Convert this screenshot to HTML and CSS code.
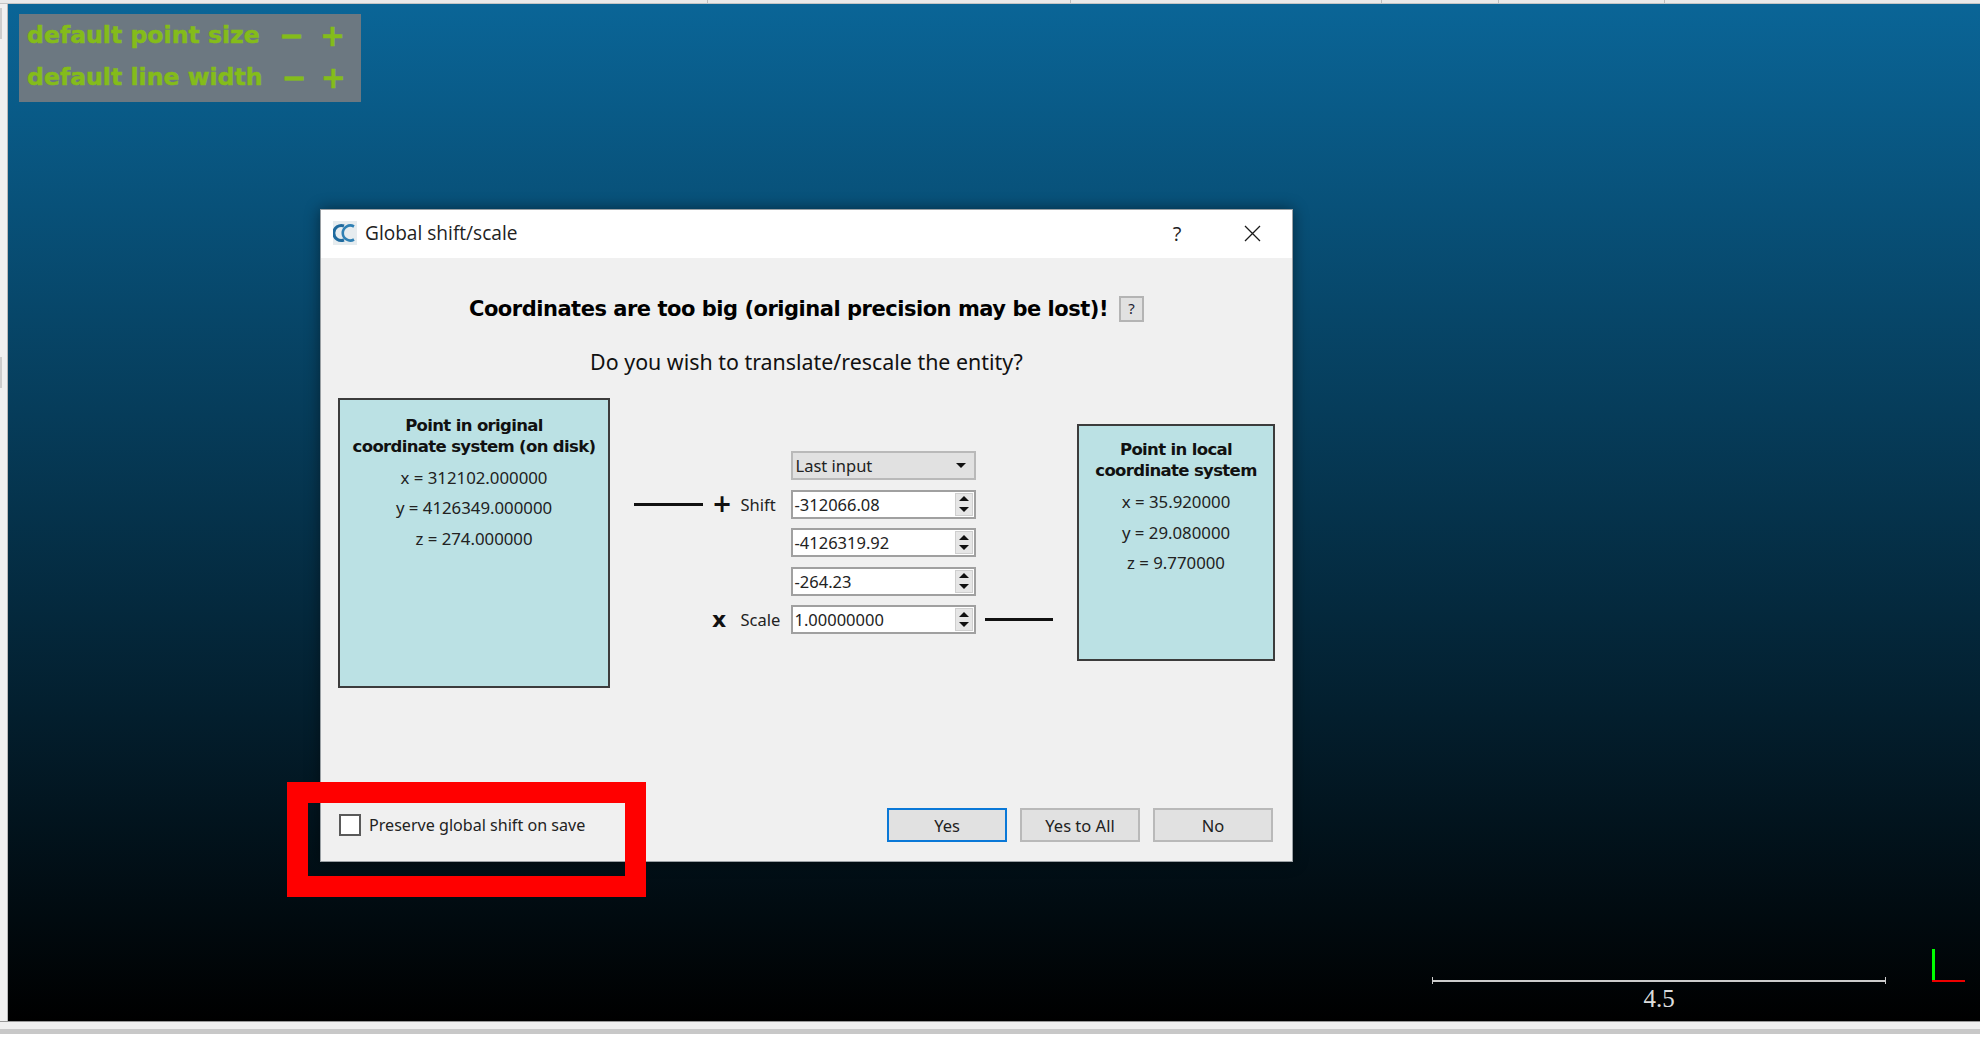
FILE: index.html
```html
<!DOCTYPE html>
<html lang="en">
<head>
<meta charset="utf-8">
<title>Global shift/scale</title>
<link rel="stylesheet" href="styles.css">
</head>
<body>
<div class="app">
  <div class="topbar">
    <span class="tab tab-a"></span><span class="tab tab-b"></span><span class="tab tab-c"></span><span class="tab tab-d"></span><span class="tab tab-e"></span>
  </div>
  <div class="middle">
    <div class="leftstrip"><span class="handle handle-a"></span><span class="handle handle-b"></span></div>
    <main class="viewport">
      <div class="hud">
        <div class="hud-row"><span class="hud-label">default point size</span><span class="hud-btn">−</span><span class="hud-btn">+</span></div>
        <div class="hud-row"><span class="hud-label">default line width</span><span class="hud-btn">−</span><span class="hud-btn">+</span></div>
      </div>

      <section class="dialog">
        <header class="titlebar">
          <svg class="cc-icon" width="24" height="24" viewBox="0 0 24 24"><rect width="24" height="24" fill="#e6ecef"/><path d="M11 5A7.500 7.500 0 1 0 11 19" fill="none" stroke="#1f6a9e" stroke-width="3"/><path d="M21 5.500A7.500 7.500 0 1 0 21 18.500" fill="none" stroke="#2f80b4" stroke-width="2.600"/></svg>
          <span class="title">Global shift/scale</span>
          <span class="title-help">?</span>
          <svg class="title-close" width="17" height="17" viewBox="0 0 17 17"><path d="M1 1L16 16M16 1L1 16" stroke="#1a1a1a" stroke-width="1.300" fill="none"/></svg>
        </header>
        <div class="content">
          <div class="heading-row">
            <h1 class="heading">Coordinates are too big (original precision may be lost)!</h1>
            <span class="mini-btn">?</span>
          </div>
          <p class="ask">Do you wish to translate/rescale the entity?</p>
          <div class="transform">
            <div class="panel panel-left">
              <h2 class="panel-title">Point in original<br>coordinate system (on disk)</h2>
              <p class="coord">x = 312102.000000</p>
              <p class="coord">y = 4126349.000000</p>
              <p class="coord">z = 274.000000</p>
            </div>
            <div class="controls">
              <div class="combo field-col"><span>Last input</span><i class="tri-down"></i></div>
              <span class="line line-left"></span>
              <span class="sign">+</span>
              <span class="ctl-label">Shift</span>
              <div class="spin field-col"><span>-312066.08</span><span class="spin-btns"><i class="tri-up"></i><i class="tri-down"></i></span></div>
              <div class="spin field-col"><span>-4126319.92</span><span class="spin-btns"><i class="tri-up"></i><i class="tri-down"></i></span></div>
              <div class="spin field-col"><span>-264.23</span><span class="spin-btns"><i class="tri-up"></i><i class="tri-down"></i></span></div>
              <span class="sign sign-x">x</span>
              <span class="ctl-label">Scale</span>
              <div class="spin field-col"><span>1.00000000</span><span class="spin-btns"><i class="tri-up"></i><i class="tri-down"></i></span></div>
              <span class="line line-right"></span>
            </div>
            <div class="panel panel-right">
              <h2 class="panel-title">Point in local<br>coordinate system</h2>
              <p class="coord">x = 35.920000</p>
              <p class="coord">y = 29.080000</p>
              <p class="coord">z = 9.770000</p>
            </div>
          </div>
          <footer class="footer">
            <label class="check"><span class="box"></span>Preserve global shift on save</label>
            <div class="buttons">
              <span class="btn btn-default">Yes</span>
              <span class="btn">Yes to All</span>
              <span class="btn">No</span>
            </div>
          </footer>
        </div>
      </section>

      <div class="highlight"></div>

      <div class="scalebar"><span class="scale-line"></span><span class="scale-text">4.5</span></div>
      <div class="axes"><span class="axis-y"></span><span class="axis-x"></span></div>
    </main>
  </div>
  <div class="statusbar"></div>
</div>
</body>
</html>
```
FILE: styles.css
```css
* { box-sizing: border-box; }
html, body { margin: 0; height: 100%; background: #fff; }
body { overflow: hidden; font-family: "Noto Sans", sans-serif; color: #111; }
.app { width: 1980px; height: 1046px; display: flex; flex-direction: column; }

.topbar { height: 4px; background: #e9e9e9; border-bottom: 1px solid #c4c4c4; position: relative; flex: none; }
.tab { position: absolute; top: 0; width: 1px; height: 3px; background: #bdbdbd; }
.tab-a { left: 707px; } .tab-b { left: 1070px; } .tab-c { left: 1381px; } .tab-d { left: 1498px; } .tab-e { left: 1664px; }

.middle { height: 1017px; display: flex; flex: none; }
.leftstrip { width: 8px; background: #f0f0f0; border-right: 1px solid #b9b9b9; position: relative; flex: none; }
.handle { position: absolute; left: 0; width: 2px; background: #cdcdcd; }
.handle-a { top: 4px; height: 31px; }
.handle-b { top: 353px; height: 31px; }

.viewport { position: relative; flex: 1; background: linear-gradient(#0a6597, #000 100%); overflow: hidden; }

.hud { position: absolute; left: 11px; top: 10px; width: 342px; height: 88px; background: #6c7881; padding: 0 8px; }
.hud-row { display: flex; align-items: center; height: 42px; font: bold 23.600px "DejaVu Sans", sans-serif; color: #84bc1a; -webkit-text-stroke: .5px #84bc1a; }
.hud-label { width: 232px; white-space: nowrap; }
.hud-row + .hud-row .hud-label { width: 236px; }
.hud-btn { width: 42px; text-align: center; font-size: 30px; }
.hud-label + .hud-btn { margin-left: 12px; }

.dialog { position: absolute; left: 312px; top: 205px; width: 973px; height: 653px; display: flex; flex-direction: column; background: #f0f0f0; border: 1px solid #9aa0a4; box-shadow: 0 0 14px rgba(0,0,0,.45); }
.titlebar { height: 48px; background: #fff; display: flex; align-items: center; padding: 0 0 2px 12px; flex: none; }
.cc-icon { flex: none; }
.title { margin-left: 8px; font: 19.100px "Open Sans", sans-serif; color: #222; }
.title-help { margin-left: auto; font: 20px "Open Sans", sans-serif; color: #222; width: 16px; text-align: center; }
.title-close { margin-left: 59px; margin-right: 31px; }

.content { flex: 1; display: flex; flex-direction: column; }
.heading-row { display: flex; justify-content: center; align-items: center; gap: 11px; margin-top: 37.500px; height: 27px; }
.heading { margin: 0; font: bold 21px "DejaVu Sans", sans-serif; letter-spacing: -.48px; color: #000; white-space: nowrap; }
.mini-btn { width: 25px; height: 26px; background: #e1e1e1; border: 2px solid #b4b4b4; font-size: 15px; line-height: 21px; text-align: center; color: #223; }
.ask { margin: 25px 0 0; text-align: center; font: 21.400px "Noto Sans", sans-serif; line-height: 28px; color: #111; height: 28px; }

.transform { display: flex; align-items: center; height: 290px; margin-top: 22px; padding-left: 17px; }
.panel { background: #bbe1e4; border: 2px solid #3c3c3c; text-align: center; flex: none; }
.panel-left { width: 272px; height: 290px; padding-top: 15px; }
.panel-right { width: 198px; height: 237px; padding-top: 13px; margin-left: 24px; }
.panel-title { margin: 0 0 6px; font: bold 16.500px/21px "DejaVu Sans", sans-serif; letter-spacing: -.65px; color: #111; }
.coord { margin: 0; font-size: 16.800px; line-height: 30.500px; color: #222; }

.controls { display: grid; grid-template-columns: 70px 37.500px 50px 185px 77.500px; grid-auto-rows: 29px; row-gap: 9.500px; margin-left: 23px; align-items: center; flex: none; }
.field-col { grid-column: 4; }
.line { height: 3px; background: #111; }
.line-left { grid-column: 1; width: 69px; justify-self: end; }
.line-right { grid-column: 5; width: 68px; justify-self: end; }
.sign { grid-column: 2; font: bold 24px/29px "DejaVu Sans", sans-serif; padding-left: 9px; color: #111; }
.sign-x { font-size: 22px; }
.ctl-label { grid-column: 3; font-size: 16.500px; color: #222; }
.combo { grid-column: 4; height: 29px; background: #e1e1e1; border: 2px solid #b9b9b9; display: flex; align-items: center; justify-content: space-between; padding: 0 8px 0 3px; font-size: 16.500px; color: #222; }
.spin { height: 29px; background: #fff; border: 2px solid #a0a0a0; display: flex; align-items: center; justify-content: space-between; padding-left: 2px; padding-right: 1px; font-size: 16.500px; color: #222; }
.spin-btns { width: 18px; height: 23px; background: #e6e6e6; border: 1px solid #cfcfcf; display: flex; flex-direction: column; justify-content: space-around; align-items: center; }
.tri-up { width: 0; height: 0; border-left: 5px solid transparent; border-right: 5px solid transparent; border-bottom: 5px solid #111; }
.tri-down { width: 0; height: 0; border-left: 5px solid transparent; border-right: 5px solid transparent; border-top: 5px solid #111; }

.footer { margin-top: auto; padding: 0 19px 19px 18px; display: flex; align-items: center; justify-content: space-between; }
.check { display: flex; align-items: center; font-size: 16.100px; color: #222; }
.box { width: 22px; height: 22px; background: #fff; border: 2px solid #5a5a5a; margin-right: 8px; }
.buttons { display: flex; gap: 13px; }
.btn { width: 120px; height: 34px; background: #e1e1e1; border: 2px solid #b9b9b9; display: flex; align-items: center; justify-content: center; font-size: 16.500px; color: #222; }
.btn-default { border-color: #0a78d7; }

.highlight { position: absolute; left: 279px; top: 778px; width: 359px; height: 115px; border: 21px solid #f00; }

.scalebar { position: absolute; left: 1424px; top: 973px; width: 454px; height: 40px; }
.scale-line { display: block; height: 7px; border-left: 1px solid #ccc; border-right: 1px solid #ccc; background: linear-gradient(#ccc,#ccc) center / 100% 2px no-repeat; }
.scale-text { display: block; text-align: center; font: 25px "Liberation Serif", serif; color: #ddd; margin-top: 1px; }

.axes { position: absolute; left: 1924px; top: 945px; width: 33px; height: 34px; }
.axis-y { position: absolute; left: 0; top: 0; width: 3px; height: 33px; background: #0f0; }
.axis-x { position: absolute; left: 0; top: 31px; width: 33px; height: 2px; background: #e00; }

.statusbar { flex: none; height: 25px; background: linear-gradient(#f0f0f0 0 7px, #c8c8c8 7px 12px, #fff 12px); border-top: 1px solid #999; }
```
